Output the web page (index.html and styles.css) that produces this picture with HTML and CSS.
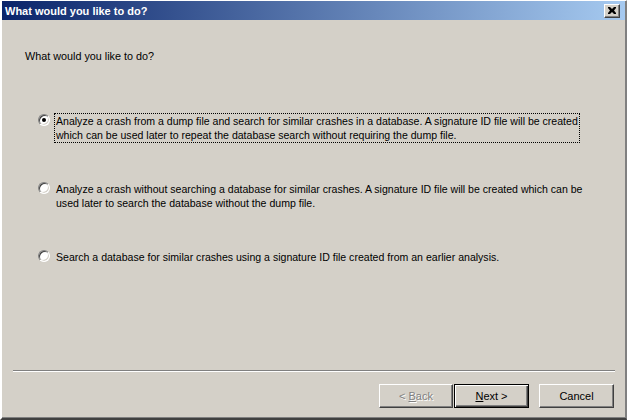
FILE: index.html
```html
<!DOCTYPE html>
<html>
<head>
<meta charset="utf-8">
<link rel="stylesheet" href="styles.css">
</head>
<body>
<div class="window">
  <div class="titlebar">
    <span class="title">What would you like to do?</span>
    <span class="close"><svg width="8" height="7" viewBox="0 0 8 7"><path d="M0 0h2l2 2 2-2h2v1l-2 2.5 2 2.5v1h-2l-2-2-2 2h-2v-1l2-2.5-2-2.5z" fill="#000"/></svg></span>
  </div>
  <div class="body">
    <div class="prompt">What would you like to do?</div>
    <div class="options">
      <div class="option">
        <span class="radio checked"></span>
        <span class="label focus">Analyze a crash from a dump file and search for similar crashes in a database. A signature ID file will be created<br>which can be used later to repeat the database search without requiring the dump file.</span>
      </div>
      <div class="option">
        <span class="radio"></span>
        <span class="label">Analyze a crash without searching a database for similar crashes. A signature ID file will be created which can be<br>used later to search the database without the dump file.</span>
      </div>
      <div class="option">
        <span class="radio"></span>
        <span class="label">Search a database for similar crashes using a signature ID file created from an earlier analysis.</span>
      </div>
    </div>
    <div class="footer">
      <div class="separator"></div>
      <div class="buttons">
        <button class="btn disabled">&lt; <u>B</u>ack</button>
        <button class="btn default"><u>N</u>ext &gt;</button>
        <button class="btn cancel">Cancel</button>
      </div>
    </div>
  </div>
</div>
</body>
</html>
```

FILE: styles.css
```css
html, body {
  margin: 0;
  padding: 0;
  width: 627px;
  height: 420px;
  overflow: hidden;
  background: #d4d0c8;
  font-family: "Liberation Sans", Arial, sans-serif;
  font-size: 11px;
  color: #000;
}
.window {
  box-sizing: border-box;
  width: 627px;
  height: 420px;
  display: flex;
  flex-direction: column;
  border-top: 1px solid #ffffff;
  border-left: 2px solid #ffffff;
  border-right: 1px solid #808080;
  border-bottom: 2px solid #404040;
  box-shadow: inset -1px -1px 0 #808080;
}
.titlebar {
  height: 19px;
  flex: none;
  margin: 0 1px 0 0;
  background: linear-gradient(to right, #0a246a 0%, #a6caf0 100%);
  display: flex;
  align-items: center;
  justify-content: space-between;
  padding: 0 5px 0 3px;
}
.title {
  color: #fff;
  font-weight: bold;
  font-size: 11px;
  font-family: "Liberation Sans", Arial, sans-serif;
}
.close {
  box-sizing: border-box;
  width: 16px;
  height: 14px;
  background: #d4d0c8;
  border-top: 1px solid #fff;
  border-left: 1px solid #fff;
  border-right: 1px solid #404040;
  border-bottom: 1px solid #404040;
  box-shadow: inset -1px -1px 0 #808080;
  display: flex;
  align-items: center;
  justify-content: center;
}
.body {
  flex: 1;
  display: flex;
  flex-direction: column;
}
.prompt {
  margin: 29px 0 0 23px;
  line-height: 14px;
  font-size: 10.8px;
}
.options {
  display: flex;
  flex-direction: column;
  margin: 50px 0 0 36px;
  gap: 38px;
}
.option {
  display: flex;
  align-items: flex-start;
}
.radio {
  box-sizing: border-box;
  width: 12px;
  height: 12px;
  border-radius: 50%;
  margin-top: 1px;
  margin-right: 4px;
  background: #fff;
  border: 1px solid;
  border-color: #808080 #ffffff #ffffff #808080;
  box-shadow: inset 1px 1px 0 #404040, inset -1px -1px 0 #d4d0c8;
  flex: none;
  position: relative;
}
.radio.checked::after {
  content: "";
  position: absolute;
  left: 3px;
  top: 3px;
  width: 4px;
  height: 4px;
  border-radius: 50%;
  background: #000;
}
.label {
  line-height: 14px;
  padding: 0 1px;
  border: 1px dotted transparent;
  font-size: 10.55px;
}
.label.focus {
  border-color: #000;
}
.footer {
  margin-top: auto;
  padding: 0 11px 10px 11px;
}
.separator {
  height: 0;
  border-top: 1px solid #808080;
  border-bottom: 1px solid #ffffff;
}
.buttons {
  display: flex;
  justify-content: flex-end;
  margin-top: 12px;
}
.btn {
  box-sizing: border-box;
  height: 24px;
  width: 75px;
  font-family: "Liberation Sans", Arial, sans-serif;
  font-size: 11px;
  background: #d4d0c8;
  color: #000;
  border: 1px solid;
  border-color: #ffffff #404040 #404040 #ffffff;
  box-shadow: inset -1px -1px 0 #808080;
  padding: 0;
}
.btn.disabled {
  width: 74px;
  color: #808080;
  text-shadow: 1px 1px 0 #fff;
  margin-right: 1px;
}
.btn.default {
  width: 75px;
  border: 1px solid #000;
  box-shadow: inset 1px 1px 0 #fff, inset -1px -1px 0 #404040, inset -2px -2px 0 #808080;
  margin-right: 10px;
}
.btn.cancel {
  margin-right: 1px;
}
.btn u {
  text-decoration: underline;
}
```
